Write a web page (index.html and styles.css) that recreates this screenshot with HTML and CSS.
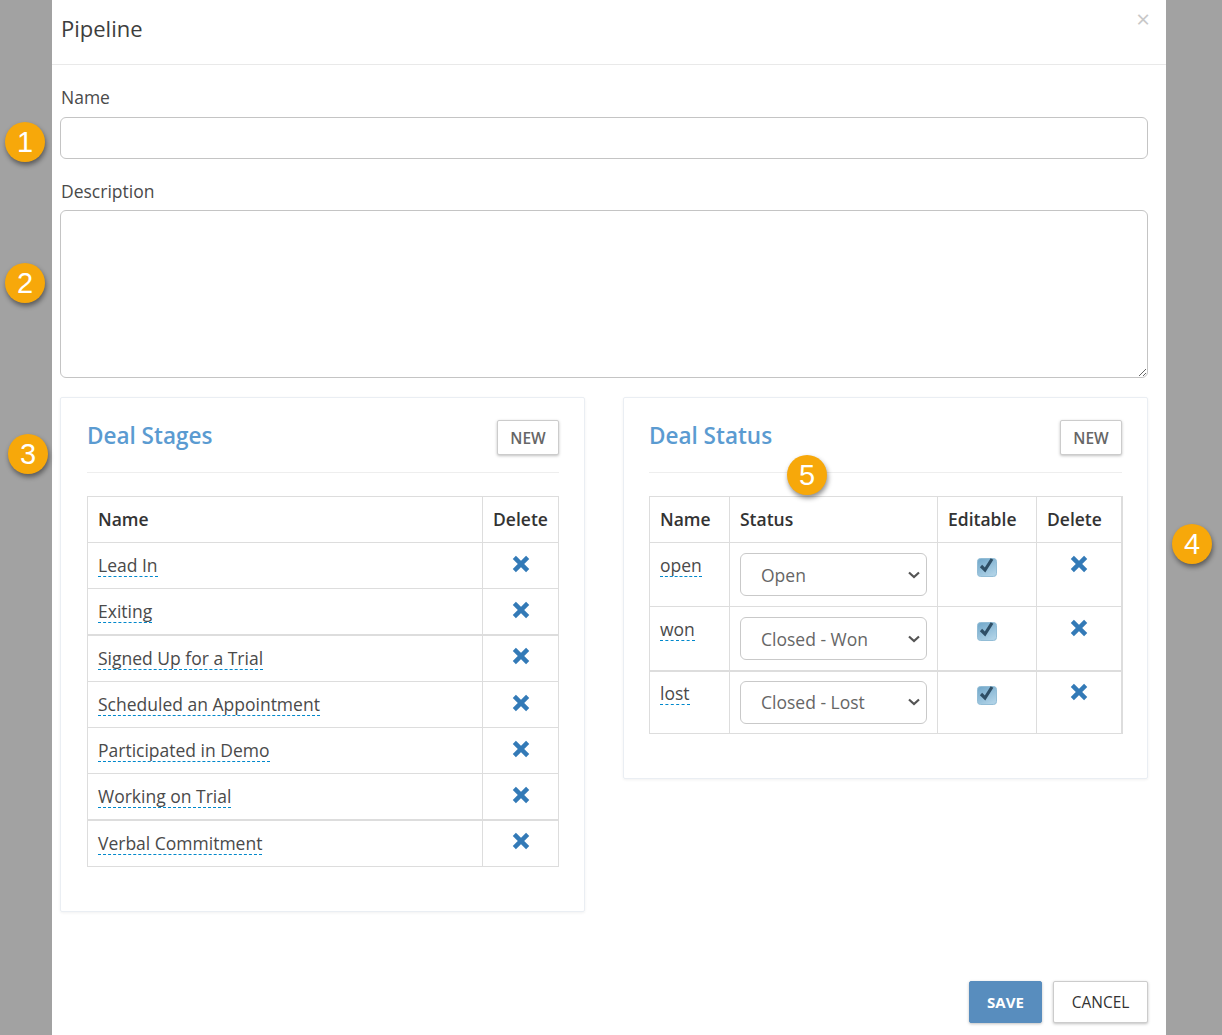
FILE: index.html
```html
<!DOCTYPE html>
<html>
<head>
  <title>Pipeline</title>
  <link rel="stylesheet" href="styles.css">
</head>
<body>
  <div class="modal">
    <div class="modal-header">
      <h4>Pipeline</h4>
      <span class="close">&times;</span>
    </div>
    <div class="modal-body">
      <label class="field-label">Name</label>
      <input class="form-control" type="text">
      <label class="field-label desc-label">Description</label>
      <textarea class="form-control desc-input"></textarea>

      <div class="panels">
        <div class="panel">
          <div class="panel-head">
            <h3>Deal Stages</h3>
            <button class="btn">NEW</button>
          </div>
          <table class="grid stages">
            <tr class="head-row"><th>Name</th><th class="col-del">Delete</th></tr>
            <tr><td><span class="editable">Lead In</span></td><td class="col-del"><svg class="del" viewBox="0 0 18 18"><path d="M3 3L15 15M15 3L3 15"/></svg></td></tr>
            <tr class="thick"><td><span class="editable">Exiting</span></td><td class="col-del"><svg class="del" viewBox="0 0 18 18"><path d="M3 3L15 15M15 3L3 15"/></svg></td></tr>
            <tr class="after-thick"><td><span class="editable">Signed Up for a Trial</span></td><td class="col-del"><svg class="del" viewBox="0 0 18 18"><path d="M3 3L15 15M15 3L3 15"/></svg></td></tr>
            <tr><td><span class="editable">Scheduled an Appointment</span></td><td class="col-del"><svg class="del" viewBox="0 0 18 18"><path d="M3 3L15 15M15 3L3 15"/></svg></td></tr>
            <tr><td><span class="editable">Participated in Demo</span></td><td class="col-del"><svg class="del" viewBox="0 0 18 18"><path d="M3 3L15 15M15 3L3 15"/></svg></td></tr>
            <tr class="thick"><td><span class="editable">Working on Trial</span></td><td class="col-del"><svg class="del" viewBox="0 0 18 18"><path d="M3 3L15 15M15 3L3 15"/></svg></td></tr>
            <tr class="after-thick"><td><span class="editable">Verbal Commitment</span></td><td class="col-del"><svg class="del" viewBox="0 0 18 18"><path d="M3 3L15 15M15 3L3 15"/></svg></td></tr>
          </table>
        </div>

        <div class="panel panel-short">
          <div class="panel-head">
            <h3>Deal Status</h3>
            <button class="btn">NEW</button>
          </div>
          <table class="grid status">
            <tr class="head-row">
              <th class="col-name">Name</th><th class="col-status">Status</th><th class="col-edit">Editable</th><th class="col-del2">Delete</th>
            </tr>
            <tr>
              <td><span class="editable">open</span></td>
              <td><select class="status-select"><option>Open</option></select></td>
              <td class="col-center"><svg class="check" viewBox="0 0 20 20"><use href="#tick"/></svg></td>
              <td class="col-center"><svg class="del" viewBox="0 0 18 18"><path d="M3 3L15 15M15 3L3 15"/></svg></td>
            </tr>
            <tr class="thick">
              <td><span class="editable">won</span></td>
              <td><select class="status-select"><option>Closed - Won</option></select></td>
              <td class="col-center"><svg class="check" viewBox="0 0 20 20"><use href="#tick"/></svg></td>
              <td class="col-center"><svg class="del" viewBox="0 0 18 18"><path d="M3 3L15 15M15 3L3 15"/></svg></td>
            </tr>
            <tr class="after-thick">
              <td><span class="editable">lost</span></td>
              <td><select class="status-select"><option>Closed - Lost</option></select></td>
              <td class="col-center"><svg class="check" viewBox="0 0 20 20"><use href="#tick"/></svg></td>
              <td class="col-center"><svg class="del" viewBox="0 0 18 18"><path d="M3 3L15 15M15 3L3 15"/></svg></td>
            </tr>
          </table>
        </div>
      </div>
    </div>
    <div class="modal-footer">
      <button class="btn btn-save">SAVE</button>
      <button class="btn btn-cancel">CANCEL</button>
    </div>
  </div>

  <div class="badge badge-1">1</div>
  <div class="badge badge-2">2</div>
  <div class="badge badge-3">3</div>
  <div class="badge badge-4">4</div>
  <div class="badge badge-5">5</div>

  <svg class="defs" width="0" height="0">
    <defs>
      <linearGradient id="boxFill" x1="0" y1="0" x2="0.6" y2="1">
        <stop offset="0" stop-color="#6fa6c9"/>
        <stop offset="1" stop-color="#aed1e6"/>
      </linearGradient>
      <g id="tick">
        <rect x="0.5" y="1.5" width="19" height="18" rx="3" fill="url(#boxFill)" stroke="#93bdd6" stroke-width="1"/>
        <path d="M4 9L8 13L15 2" fill="none" stroke="#2f4f66" stroke-width="3.2"/>
      </g>
    </defs>
  </svg>
</body>
</html>
```

FILE: styles.css
```css
:root {
  --backdrop: #a2a2a2;
  --line: #dddddd;
  --soft-line: #eeeeee;
  --text: #333333;
  --blue: #5b9bd1;
  --x-blue: #337ab7;
  --orange: #f7a80a;
}

* {
  box-sizing: border-box;
}

html, body {
  height: 100%;
}

body {
  margin: 0;
  background: var(--backdrop);
  font-family: "Open Sans", "Noto Sans", sans-serif;
  color: var(--text);
  overflow: hidden;
  position: relative;
}

.defs {
  position: absolute;
}

.modal {
  width: 1114px;
  height: 1035px;
  margin-left: 52px;
  background: #fff;
  display: flex;
  flex-direction: column;
}

.modal-header {
  height: 65px;
  flex: none;
  border-bottom: 1px solid #e9e9e9;
  padding: 0 16px 0 9px;
  display: flex;
  justify-content: space-between;
}

.modal-header h4 {
  margin: 0;
  font-size: 22px;
  font-weight: 400;
  line-height: 57px;
  color: #3d3d3d;
}

.close {
  color: #c8c8c8;
  font-size: 24px;
  line-height: 38px;
}

.modal-body {
  flex: 1;
  padding: 0 18px 0 8px;
  display: flex;
  flex-direction: column;
}

.field-label {
  font-size: 17.5px;
  color: #4a4a4a;
  line-height: 26px;
  margin: 19px 0 7px 1px;
}

.desc-label {
  margin: 19px 0 6px 1px;
}

.form-control {
  display: block;
  width: 100%;
  height: 42px;
  border: 1px solid #c4c4c4;
  border-radius: 6px;
  background: #fff;
  flex: none;
}

.desc-input {
  height: 168px;
}

.panels {
  display: flex;
  align-items: flex-start;
  gap: 38px;
  margin-top: 19px;
}

.panel {
  flex: 0 0 525px;
  min-width: 0;
  height: 515px;
  padding: 22px 25px 0 26px;
  border: 1px solid #eaeef3;
  border-radius: 2px;
  box-shadow: 0 1px 3px rgba(0, 0, 0, 0.06);
}

.panel-short {
  height: 382px;
  padding-left: 25px;
}

.panel-head {
  display: flex;
  justify-content: space-between;
  align-items: flex-start;
  height: 53px;
  border-bottom: 1px solid var(--soft-line);
}

.panel-head h3 {
  margin: 1px 0 0;
  font-size: 22.5px;
  font-weight: 600;
  line-height: 30px;
  color: var(--blue);
}

.btn {
  font-family: inherit;
  font-size: 15.5px;
  font-weight: 600;
  color: #666;
  background: #fff;
  border: 1px solid #ccc;
  border-radius: 2px;
  box-shadow: 0 1px 3px rgba(0, 0, 0, 0.25);
  height: 35px;
  width: 62px;
  padding: 0;
}

.grid {
  border-collapse: collapse;
  table-layout: fixed;
  width: 100%;
  margin-top: 23px;
  font-size: 17.5px;
}

.grid th, .grid td {
  border: 1px solid var(--line);
  padding: 0 10px;
  text-align: left;
  vertical-align: top;
}

.grid th {
  font-weight: 600;
  height: 46px;
  line-height: 45px;
}

.grid td {
  height: 46px;
  line-height: 24px;
  padding-top: 10px;
}

.grid .thick td {
  border-bottom-width: 2px;
}

.grid .after-thick td {
  height: 47px;
}

.stages .after-thick .del {
  margin-top: 0;
}

.status td {
  height: 64px;
}

.grid.status .after-thick td {
  height: 63px;
  padding-top: 9px;
}

.grid .col-del {
  width: 76px;
  text-align: center;
}

.col-name {
  width: 80px;
}

.col-status {
  width: 208px;
}

.col-edit {
  width: 99px;
}

.col-del2 {
  width: 85px;
}

.grid .col-center {
  text-align: center;
}

.status {
  border-right: 2px solid var(--line);
}

.editable {
  border-bottom: 1px dashed #0088cc;
  color: #4a4a4a;
  display: inline-block;
  line-height: 22px;
}

.del {
  width: 20px;
  height: 20px;
  display: block;
  margin: 1px auto 0;
}

.del path {
  fill: none;
  stroke: var(--x-blue);
  stroke-width: 4;
}

.check {
  width: 20px;
  height: 20px;
  display: block;
  margin: 4px auto 0;
}

.status-select {
  display: block;
  width: 187px;
  height: 43px;
  font-family: inherit;
  font-size: 17.5px;
  color: #666;
  border: 1px solid #c9c9c9;
  border-radius: 6px;
  padding-left: 20px;
  appearance: none;
  background: #fff url("data:image/svg+xml,%3Csvg xmlns='http://www.w3.org/2000/svg' viewBox='0 0 12 8'%3E%3Cpath d='M1 1.5L6 6L11 1.5' fill='none' stroke='%23555' stroke-width='2.2'/%3E%3C/svg%3E") no-repeat right 6px center / 12px 8px;
}

.modal-footer {
  flex: none;
  display: flex;
  justify-content: flex-end;
  gap: 11px;
  padding: 0 18px 12px 0;
}

.btn-save {
  width: 73px;
  height: 42px;
  background: #588dbe;
  border-color: #588dbe;
  color: #fff;
  font-size: 15px;
  font-weight: 700;
}

.btn-cancel {
  width: 95px;
  height: 42px;
  color: #333;
  font-weight: 400;
}

.badge {
  position: absolute;
  width: 40px;
  height: 40px;
  border-radius: 50%;
  background: var(--orange);
  color: #fff;
  font-family: "Liberation Sans", Arial, sans-serif;
  font-size: 29px;
  line-height: 40px;
  text-align: center;
  box-shadow: 1px 3px 5px rgba(0, 0, 0, 0.45);
}

.badge-1 { left: 5px; top: 122px; }
.badge-2 { left: 5px; top: 263px; }
.badge-3 { left: 8px; top: 434px; }
.badge-4 { left: 1172px; top: 524px; }
.badge-5 { left: 787px; top: 455px; }
```
